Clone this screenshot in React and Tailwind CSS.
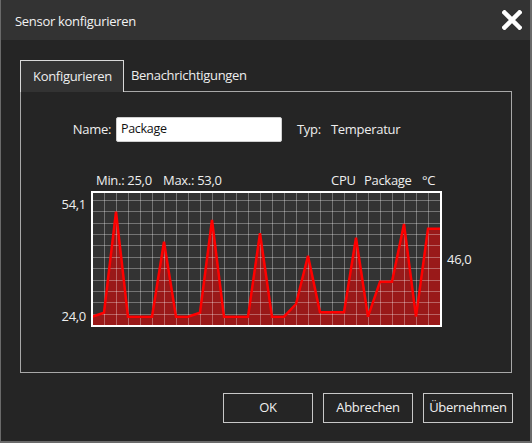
import React from 'react'

const values = [
  123.7, 119.7, 18.7, 123.7, 123.7, 123.7, 48.7, 123.7, 123.7, 119.7,
  27, 123.7, 123.7, 123.7, 40.3, 123.7, 123.7, 111, 62.7, 119.3,
  119.3, 119.3, 44.7, 123.7, 88.7, 88.7, 31, 123.7, 35.7, 35.7,
]

function Chart() {
  const pts = values.map((y, i) => `${i * 12 - 1},${y}`).join(' ')
  const area = `-1,132 ${pts} 348,132`
  const vLines = Array.from({ length: 29 }, (_, i) => (i + 1) * 12 - 1)
  const hLines = Array.from({ length: 11 }, (_, k) => 132 - (k + 1) * 11.36)

  return (
    <div className="w-[351px] h-[136px] border-2 border-white bg-[#333333] overflow-hidden">
      <svg width="347" height="132" viewBox="0 0 347 132" className="block">
        <polygon points={area} fill="rgba(255,0,0,0.5)" />
        {vLines.map((x) => (
          <line key={'v' + x} x1={x + 0.5} y1="0" x2={x + 0.5} y2="132" stroke="rgba(255,255,255,0.32)" strokeWidth="1" />
        ))}
        {hLines.map((y) => (
          <line key={'h' + y} x1="0" y1={Math.round(y) + 0.5} x2="347" y2={Math.round(y) + 0.5} stroke="rgba(255,255,255,0.32)" strokeWidth="1" />
        ))}
        <polyline points={pts} fill="none" stroke="#ff0000" strokeWidth="2.5" strokeLinejoin="miter" />
      </svg>
    </div>
  )
}

function Button({ children }) {
  return (
    <button className="w-[90px] h-[30px] border border-[#c8c8c8] bg-[#252525] text-[#f0f0f0] flex items-center justify-center">
      {children}
    </button>
  )
}

export default function App() {
  return (
    <div
      className="w-[532px] h-[443px] bg-[#252525] border-l border-r-2 border-b-2 border-[#6a6a6a] flex flex-col text-[#eeeeee] text-[13px] tracking-[-0.3px]"
      style={{ fontFamily: '"Open Sans", "Noto Sans", sans-serif' }}
    >
      {/* title bar */}
      <div className="h-[40px] bg-[#333333] flex items-center justify-between pl-[14px] pr-[8px]">
        <span className="mt-[3px] text-[#f2f2f2]">Sensor konfigurieren</span>
        <svg width="20" height="20" viewBox="0 0 20 20">
          <path d="M2.5 2.5 L17.5 17.5 M17.5 2.5 L2.5 17.5" stroke="#ffffff" strokeWidth="4.5" strokeLinecap="square" />
        </svg>
      </div>

      <div className="pl-[19px] pt-[20px]">
        {/* tabs */}
        <div className="flex w-[492px] h-[32px]">
          <div className="w-[104px] h-[32px] border-l border-t border-r border-[#d8d8d8] bg-[#333333] flex items-center pl-[12px] pt-[1px]">
            Konfigurieren
          </div>
          <div className="flex-1 border-b border-[#a8a8a8] flex items-center pl-[7px] pt-[1px]">
            Benachrichtigungen
          </div>
        </div>

        {/* panel */}
        <div className="w-[492px] h-[281px] border-l border-r border-b border-[#a8a8a8] flex flex-col">
          <div className="mt-[25px] h-[25px] flex items-center">
            <span className="w-[90px] text-right">Name:</span>
            <div className="ml-[5px] w-[166px] h-[25px] bg-white border border-[#d0d0d0] rounded-[2px] flex items-center pl-[4px] text-[12.5px] text-[#111111]">
              Package
            </div>
            <span className="ml-[15px] w-[34px]">Typ:</span>
            <span>Temperatur</span>
          </div>

          <div className="mt-[30px] h-[18px] flex items-center pl-[75px]">
            <span className="w-[67px]">Min.: 25,0</span>
            <span className="w-[168px]">Max.: 53,0</span>
            <span className="w-[33px]">CPU</span>
            <span className="w-[58px]">Package</span>
            <span>°C</span>
          </div>

          <div className="mt-[1px] flex items-center">
            <div className="w-[70px] h-[136px] flex flex-col justify-between items-end pr-[5px] pt-[4px] pb-[1px]">
              <span>54,1</span>
              <span>24,0</span>
            </div>
            <Chart />
            <span className="ml-[5px] mt-[2px]">46,0</span>
          </div>
        </div>

        {/* buttons */}
        <div className="w-[493px] mt-[20px] flex justify-end gap-[10px]">
          <Button>OK</Button>
          <Button>Abbrechen</Button>
          <Button>Übernehmen</Button>
        </div>
      </div>
    </div>
  )
}
